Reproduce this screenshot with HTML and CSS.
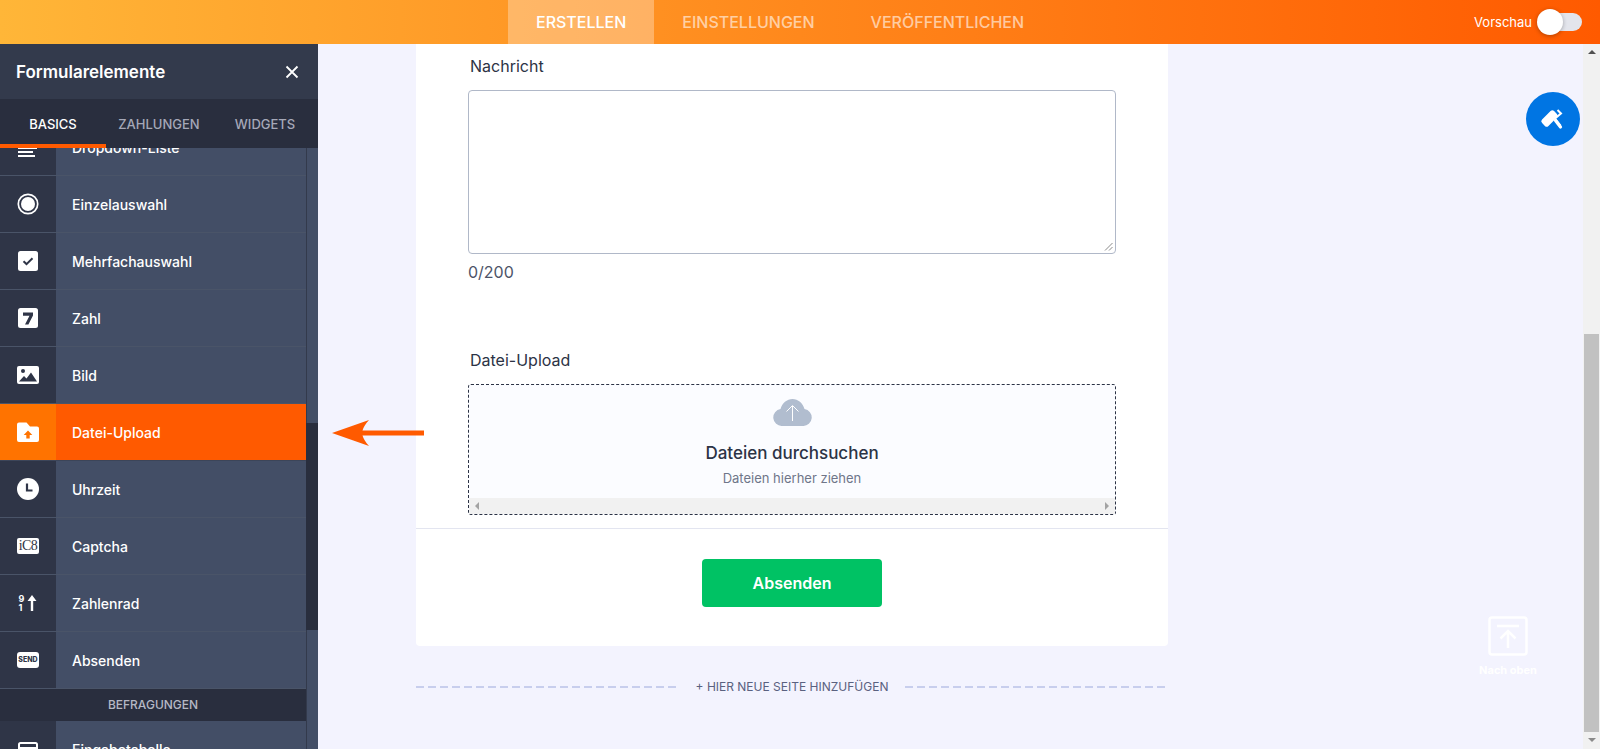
FILE: index.html
```html
<!DOCTYPE html>
<html lang="de">
<head>
    <meta charset="UTF-8">
    <meta name="viewport" content="width=device-width, initial-scale=1.0">
    <title>Formular erstellen</title>
    <link rel="stylesheet" href="styles.css">
</head>
<body>
    <header class="topbar">
        <nav class="topnav">
            <a class="topnav-item active">ERSTELLEN</a>
            <a class="topnav-item">EINSTELLUNGEN</a>
            <a class="topnav-item">VERÖFFENTLICHEN</a>
        </nav>
        <div class="preview">
            <span>Vorschau</span>
            <div class="toggle"><div class="knob"></div></div>
        </div>
    </header>

    <div class="workspace">
        <aside class="sidebar">
            <div class="side-head">
                <span>Formularelemente</span>
                <svg width="14" height="14" viewBox="0 0 14 14"><path d="M1.5 1.5l11 11M12.5 1.5l-11 11" stroke="#fff" stroke-width="1.8" fill="none"/></svg>
            </div>
            <div class="side-tabs">
                <a class="side-tab active">BASICS</a>
                <a class="side-tab">ZAHLUNGEN</a>
                <a class="side-tab">WIDGETS</a>
            </div>
            <div class="side-body">
                <ul class="elements">
                    <li class="element">
                        <div class="el-icon"><svg width="24" height="24" viewBox="0 0 24 24" fill="#fff"><rect x="2" y="8" width="19" height="2"/><rect x="2" y="12" width="19" height="2"/><rect x="2" y="16" width="15" height="2"/><rect x="2" y="20" width="17" height="2"/></svg></div>
                        <div class="el-name">Dropdown-Liste</div>
                    </li>
                    <li class="element">
                        <div class="el-icon"><svg width="24" height="24" viewBox="0 0 24 24"><circle cx="12" cy="12" r="9.7" fill="none" stroke="#fff" stroke-width="1.7"/><circle cx="12" cy="12" r="7" fill="#fff"/></svg></div>
                        <div class="el-name">Einzelauswahl</div>
                    </li>
                    <li class="element">
                        <div class="el-icon"><svg width="24" height="24" viewBox="0 0 24 24"><rect x="2" y="2" width="20" height="20" rx="2.5" fill="#fff"/><path d="M7.5 12.3l3 2.8 6-5.8" fill="none" stroke="#2f3547" stroke-width="2"/></svg></div>
                        <div class="el-name">Mehrfachauswahl</div>
                    </li>
                    <li class="element">
                        <div class="el-icon"><svg width="24" height="24" viewBox="0 0 24 24"><rect x="2" y="2" width="20" height="20" rx="2.5" fill="#fff"/><path d="M7 6.5h10v3l-4.6 9h-3.4l4.5-8.7H7z" fill="#2f3547"/></svg></div>
                        <div class="el-name">Zahl</div>
                    </li>
                    <li class="element">
                        <div class="el-icon"><svg width="24" height="24" viewBox="0 0 24 24"><rect x="1" y="3" width="22" height="18" rx="2" fill="#fff"/><circle cx="7" cy="8" r="2" fill="#2f3547"/><path d="M3 18.5l5-5.5 2.5 2.5 4.5-6 6 9z" fill="#2f3547"/></svg></div>
                        <div class="el-name">Bild</div>
                    </li>
                    <li class="element selected">
                        <div class="el-icon"><svg width="24" height="24" viewBox="0 0 24 24"><path d="M3 2.5h7.5l3.5 4h7a2 2 0 012 2V20a2 2 0 01-2 2H3a2 2 0 01-2-2V4.500a2 2 0 012-2z" fill="#fff"/><path d="M12 10.500l4.300 4.500h-2.600v3.500h-3.400V15H7.700z" fill="#ff7300"/></svg></div>
                        <div class="el-name">Datei-Upload</div>
                    </li>
                    <li class="element">
                        <div class="el-icon"><svg width="24" height="24" viewBox="0 0 24 24"><circle cx="12" cy="12" r="11" fill="#fff"/><path d="M11 6.500v7h5.500" fill="none" stroke="#2f3547" stroke-width="2.200"/></svg></div>
                        <div class="el-name">Uhrzeit</div>
                    </li>
                    <li class="element">
                        <div class="el-icon"><div class="captcha-icon">iC8</div></div>
                        <div class="el-name">Captcha</div>
                    </li>
                    <li class="element">
                        <div class="el-icon">
                            <div class="wheel-icon"><span>9</span><span>1</span></div>
                            <svg width="10" height="16" viewBox="0 0 10 16"><path d="M5 0l4.500 6H6.200v10H3.800V6H.5z" fill="#fff"/></svg>
                        </div>
                        <div class="el-name">Zahlenrad</div>
                    </li>
                    <li class="element">
                        <div class="el-icon"><div class="send-icon">SEND</div></div>
                        <div class="el-name">Absenden</div>
                    </li>
                    <li class="el-group">BEFRAGUNGEN</li>
                    <li class="element">
                        <div class="el-icon"><svg width="24" height="24" viewBox="0 0 24 24" fill="none" stroke="#fff" stroke-width="2"><rect x="3" y="6" width="18" height="17" rx="1.500"/><path d="M3 11h18M3 16h18M9 11v12M15 11v12"/></svg></div>
                        <div class="el-name">Eingabetabelle</div>
                    </li>
                </ul>
                <div class="side-scroll"><div class="side-thumb"></div></div>
            </div>
        </aside>

        <main class="canvas">
            <div class="canvas-inner">
                <section class="form-card">
                    <div class="field field-message">
                        <label class="field-label">Nachricht</label>
                        <div class="textarea">
                            <svg class="grip" width="9" height="9" viewBox="0 0 9 9"><path d="M8.500 1L1 8.500M8.500 5L5 8.500" stroke="#8a8a8a" stroke-width="1" fill="none"/></svg>
                        </div>
                        <div class="counter">0/200</div>
                    </div>
                    <div class="field field-upload">
                        <label class="field-label">Datei-Upload</label>
                        <div class="dropzone">
                            <div class="drop-content">
                                <svg width="39" height="27" viewBox="0 0 39 27"><path d="M9 27a8.500 8.500 0 01-1.500-16.900C9 4.200 14 0 19.500 0S30 4.200 31.500 10.100A8.500 8.500 0 0130 27z" fill="#b1bdcf"/><path d="M19.500 22V7M13.500 12.500l6-6 6 6" fill="none" stroke="#fff" stroke-width="1"/></svg>
                                <div class="drop-title">Dateien durchsuchen</div>
                                <div class="drop-sub">Dateien hierher ziehen</div>
                            </div>
                            <div class="hscroll">
                                <span class="arrow-left"></span>
                                <span class="arrow-right"></span>
                            </div>
                        </div>
                    </div>
                    <div class="form-foot">
                        <button class="submit">Absenden</button>
                    </div>
                </section>
                <div class="add-page">
                    <span class="dash"></span>
                    <span class="add-text">+ HIER NEUE SEITE HINZUFÜGEN</span>
                    <span class="dash"></span>
                </div>
            </div>

            <div class="paint-btn">
                <svg width="30" height="30" viewBox="0 0 30 30"><rect x="3" y="10" width="17" height="9" rx="2.500" transform="rotate(-45 11.500 14.500)" fill="#fff"/><path d="M19.500 6l3.500 3.500-6 5 5.500 7" fill="none" stroke="#fff" stroke-width="2"/><path d="M17.500 16.500l5 6.500" stroke="#fff" stroke-width="3.200" stroke-linecap="round"/></svg>
            </div>

            <div class="back-top">
                <svg width="40" height="40" viewBox="0 0 40 40" fill="none" stroke="#fff" stroke-width="2.500"><rect x="1.500" y="1.500" width="37" height="37" rx="2.500"/><path d="M9 10h22" stroke-width="2.500"/><path d="M20 32V15M12.500 22.500l7.500-7.500 7.500 7.500"/></svg>
                <span>Nach oben</span>
            </div>

            <svg class="pointer" width="92" height="28" viewBox="0 0 92 28"><path d="M0 14L37 1c-3.500 4-5.500 7-6.500 10.500H92v5H30.500C31.500 20 33.500 23 37 27z" fill="#ff5a00"/></svg>

            <div class="page-scroll">
                <span class="arrow-up"></span>
                <div class="page-thumb"></div>
                <span class="arrow-down"></span>
            </div>
        </main>
    </div>
</body>
</html>
```

FILE: styles.css
```css
* {
    box-sizing: border-box;
}
html, body {
    height: 100%;
}
body {
    margin: 0;
    height: 749px;
    overflow: hidden;
    font-family: Inter, "Liberation Sans", sans-serif;
    color: #2c3345;
    display: flex;
    flex-direction: column;
}

/* top bar */
.topbar {
    height: 44px;
    flex: none;
    display: flex;
    justify-content: space-between;
    background: linear-gradient(90deg, #ffb638, #ff5a00);
    position: relative;
}
.topnav {
    display: flex;
    margin-left: 508px;
}
.topnav-item {
    padding: 0 28px;
    line-height: 44px;
    font-size: 16px;
    font-weight: 500;
    color: rgba(255, 255, 255, 0.6);
}
.topnav-item:nth-child(2) {
    padding-left: 28px;
    padding-right: 28px;
}
.topnav-item.active {
    background: rgba(255, 255, 255, 0.3);
    color: #fff;
}
.preview {
    display: flex;
    align-items: center;
    margin-right: 18px;
    color: #fff;
    font-size: 13px;
}
.toggle {
    width: 44px;
    height: 18px;
    margin-left: 6px;
    border-radius: 9px;
    background: #e3e5ec;
    position: relative;
}
.knob {
    position: absolute;
    left: -1px;
    top: -4px;
    width: 26px;
    height: 26px;
    border-radius: 50%;
    background: #fff;
    box-shadow: 0 1px 4px rgba(0, 0, 0, 0.3);
}

.workspace {
    flex: 1;
    display: flex;
    min-height: 0;
}

/* left panel */
.sidebar {
    width: 318px;
    flex: none;
    display: flex;
    flex-direction: column;
    background: #434e66;
}
.side-head {
    height: 55px;
    flex: none;
    padding: 0 19px 0 16px;
    display: flex;
    align-items: center;
    justify-content: space-between;
    background: #333a4c;
    color: #fff;
    font-size: 17px;
    font-weight: 600;
}
.side-tabs {
    height: 49px;
    flex: none;
    display: flex;
    background: #292e3e;
    position: relative;
    z-index: 1;
}
.side-tab {
    font-size: 13px;
    font-weight: 500;
    line-height: 50px;
    color: #a5a8b8;
    text-align: center;
}
.side-tab:nth-child(1) {
    width: 106px;
}
.side-tab:nth-child(2) {
    width: 106px;
}
.side-tab:nth-child(3) {
    width: 106px;
}
.side-tab.active {
    color: #fff;
    border-bottom: 4px solid #ff5a00;
    height: 49px;
}
.side-body {
    flex: 1;
    min-height: 0;
    display: flex;
    overflow: hidden;
}
.elements {
    list-style: none;
    margin: -29px 0 0;
    padding: 0;
    width: 306px;
    flex: none;
}
.element {
    height: 57px;
    display: flex;
    background: #434e66;
    border-bottom: 1px solid #4a5468;
}
.el-icon {
    width: 56px;
    flex: none;
    display: flex;
    align-items: center;
    justify-content: center;
    gap: 3px;
    background: #2f3547;
}
.el-name {
    padding-left: 16px;
    display: flex;
    align-items: center;
    color: #fff;
    font-size: 14px;
    font-weight: 500;
}
.element.selected {
    background: #ff5a00;
    border-bottom-color: #3c4559;
}
.element.selected .el-icon {
    background: #ff7300;
}
.captcha-icon {
    width: 22px;
    height: 16px;
    border-radius: 2px;
    background: #fff;
    color: #2f3547;
    font-family: "Liberation Serif", serif;
    font-size: 14px;
    line-height: 16px;
    text-align: center;
    letter-spacing: -0.5px;
}
.wheel-icon {
    display: flex;
    flex-direction: column;
    color: #fff;
    font-size: 9px;
    font-weight: 700;
    line-height: 9px;
}
.send-icon {
    width: 22px;
    height: 16px;
    border-radius: 3px;
    background: #fff;
    color: #2f3547;
    font-size: 7px;
    font-weight: 800;
    line-height: 16px;
    text-align: center;
}
.el-group {
    height: 32px;
    background: #292e3e;
    color: #b5b8c5;
    font-size: 12px;
    font-weight: 500;
    line-height: 32px;
    text-align: center;
}
.side-scroll {
    width: 12px;
    flex: none;
    border-left: 1px solid #333a4c;
    background: #434e66;
    padding-top: 275px;
}
.side-thumb {
    height: 207px;
    margin-left: -1px;
    background: #292e3e;
}

/* form area */
.canvas {
    flex: 1;
    min-width: 0;
    background: #f3f3fe;
    position: relative;
    overflow: hidden;
}
.canvas-inner {
    width: 752px;
    margin-left: 98px;
}
.form-card {
    height: 602px;
    background: #fff;
    border-radius: 0 0 4px 4px;
    display: flex;
    flex-direction: column;
}
.field {
    padding: 0 52px;
}
.field-label {
    display: block;
    padding-left: 2px;
    font-size: 16px;
    line-height: 20px;
}
.field-message {
    padding-top: 12px;
}
.textarea {
    height: 164px;
    margin-top: 14px;
    border: 1px solid #b0b8c8;
    border-radius: 4px;
    position: relative;
}
.grip {
    position: absolute;
    right: 2px;
    bottom: 2px;
}
.counter {
    margin-top: 8px;
    font-size: 16px;
    line-height: 20px;
    color: #4d5468;
}
.field-upload {
    padding-top: 68px;
}
.dropzone {
    height: 131px;
    margin-top: 14px;
    border: 1px dashed #2c3345;
    border-radius: 3px;
    background: #fbfcff;
    display: flex;
    flex-direction: column;
}
.drop-content {
    flex: 1;
    padding-top: 14px;
    display: flex;
    flex-direction: column;
    align-items: center;
}
.drop-content svg {
    display: block;
}
.drop-title {
    margin-top: 16px;
    font-size: 17px;
    line-height: 22px;
    font-weight: 500;
}
.drop-sub {
    margin-top: 5px;
    font-size: 13px;
    line-height: 18px;
    color: #6f7689;
}
.hscroll {
    height: 16px;
    background: #f1f1f1;
    display: flex;
    align-items: center;
    justify-content: space-between;
    padding: 0 6px;
}
.arrow-left {
    border: 4px solid transparent;
    border-left: 0;
    border-right: 4px solid #a3a3a3;
}
.arrow-right {
    border: 4px solid transparent;
    border-right: 0;
    border-left: 4px solid #a3a3a3;
}
.form-foot {
    flex: 1;
    margin-top: 13px;
    padding-top: 30px;
    border-top: 1px solid #e3e5f0;
    text-align: center;
}
.submit {
    width: 180px;
    height: 48px;
    margin-right: 0;
    background: #00c264;
    border: none;
    border-radius: 4px;
    color: #fff;
    font-family: inherit;
    font-size: 16px;
    font-weight: 600;
}
.add-page {
    margin-top: 33px;
    display: flex;
    align-items: center;
    gap: 17px;
}
.dash {
    flex: 1;
    height: 2px;
    background: repeating-linear-gradient(90deg, #c8ceed 0 8px, transparent 8px 12px);
}
.add-text {
    font-size: 12px;
    line-height: 16px;
    color: #5a6180;
}

/* floating things over the canvas */
.paint-btn {
    position: absolute;
    left: 1208px;
    top: 48px;
    width: 54px;
    height: 54px;
    border-radius: 50%;
    background: #0075e3;
    display: flex;
    align-items: center;
    justify-content: center;
}
.back-top {
    position: absolute;
    left: 1150px;
    top: 572px;
    width: 80px;
    display: flex;
    flex-direction: column;
    align-items: center;
    gap: 7px;
    color: #fff;
    font-size: 11px;
    font-weight: 700;
}
.pointer {
    position: absolute;
    left: 14px;
    top: 375px;
}
.page-scroll {
    position: absolute;
    right: 0;
    top: 0;
    bottom: 0;
    width: 17px;
    background: #f1f1f1;
    display: flex;
    flex-direction: column;
    align-items: center;
}
.arrow-up {
    margin-top: 6px;
    border: 4px solid transparent;
    border-top: 0;
    border-bottom: 4px solid #505050;
}
.page-thumb {
    width: 15px;
    height: 398px;
    margin-top: 280px;
    background: #c1c1c1;
}
.arrow-down {
    margin-top: 6px;
    border: 4px solid transparent;
    border-bottom: 0;
    border-top: 4px solid #8a8a8a;
}
```
